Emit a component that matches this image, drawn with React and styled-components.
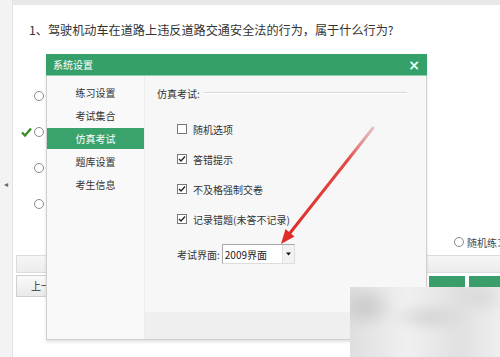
import React from "react";
import styled, { createGlobalStyle } from "styled-components";

const Global = createGlobalStyle`
  html, body { margin: 0; padding: 0; background: #fff; }
  body { font-family: "Noto Sans CJK SC", "Noto Sans", sans-serif; color: #333; }
`;

const Page = styled.div`
  position: relative;
  width: 500px;
  height: 357px;
  overflow: hidden;
  display: flex;
  flex-direction: column;
  background: #fff;
`;

const TopBand = styled.div`
  height: 5px;
  background: #e8e8e8;
  margin-left: 13px;
`;

const Body = styled.div`
  flex: 1;
  display: flex;
  margin-top: -5px;
`;

const Gutter = styled.div`
  width: 13px;
  flex-shrink: 0;
  background: #f3f3f3;
  border-right: 1px solid #e2e2e2;
  display: flex;
  flex-direction: column;
  align-items: center;
  padding-top: 178px;
  box-sizing: border-box;
  font-size: 8px;
  color: #666;
`;

const Content = styled.div`
  flex: 1;
  min-width: 0;
  overflow: hidden;
  display: flex;
  flex-direction: column;
  padding: 20px 0 0 8px;
`;

const Question = styled.div`
  height: 20px;
  line-height: 20px;
  padding-left: 8px;
  font-size: 12.15px;
  color: #333;
  white-space: nowrap;
`;

const Options = styled.div`
  margin-top: 38px;
  display: flex;
  flex-direction: column;
`;

const OptionRow = styled.div`
  height: 36px;
  display: flex;
  align-items: center;
`;

const CheckSlot = styled.div`
  width: 13px;
  display: flex;
  align-items: center;
`;

const Radio = styled.span`
  width: 8px;
  height: 8px;
  border: 1px solid #8a8a8a;
  border-radius: 50%;
  background: #fff;
  flex-shrink: 0;
`;

const RightOption = styled.div`
  margin-top: 10px;
  height: 20px;
  display: flex;
  align-items: center;
  gap: 3px;
  padding-left: 433px;
  font-size: 10px;
  color: #444;
  white-space: nowrap;
`;

const ToolBand = styled.div`
  margin-top: 3px;
  height: 16px;
  margin-left: -5px;
  background: linear-gradient(#f6f6f6, #ececec);
  border: 1px solid #dcdcdc;
  border-right: none;
`;

const ButtonRow = styled.div`
  display: flex;
  align-items: flex-start;
  margin-left: -5px;
  margin-top: 2px;
  gap: 4px;
`;

const GreyButton = styled.div`
  width: 34px;
  height: 20px;
  flex-shrink: 0;
  border: 1px solid #cfcfcf;
  background: linear-gradient(#fafafa, #e9e9e9);
  font-size: 10px;
  line-height: 20px;
  padding-left: 14px;
  white-space: nowrap;
  color: #333;
`;

const GreenButton = styled.div`
  width: ${(p) => p.w}px;
  flex-shrink: 0;
  height: 16px;
  background: #3a9e6a;
  margin-top: 1px;
  margin-left: ${(p) => p.ml || 0}px;
`;

/* Dialog */
const Dialog = styled.div`
  position: absolute;
  left: 46px;
  top: 54px;
  width: 381px;
  height: 286px;
  display: flex;
  flex-direction: column;
  background: #f7f7f7;
  border: 1px solid #cfcfcf;
  border-top: none;
  box-sizing: border-box;
  box-shadow: 0 2px 3px rgba(0, 0, 0, 0.12);
`;

const TitleBar = styled.div`
  height: 21px;
  margin: 0 -1px;
  background: #36a06b;
  border-bottom: 1px solid #8fcfac;
  display: flex;
  align-items: center;
  justify-content: space-between;
  padding: 0 7px 0 7px;
  color: #fff;
  font-size: 10px;
`;

const Close = styled.span`
  font-size: 14px;
  line-height: 1;
  font-family: "DejaVu Sans", sans-serif;
  font-weight: bold;
  color: #e8fff0;
`;

const DialogBody = styled.div`
  flex: 1;
  display: flex;
`;

const Nav = styled.div`
  width: 97px;
  background: #f9f9f9;
  border-right: 1px solid #ececec;
  padding-top: 5px;
  display: flex;
  flex-direction: column;
`;

const NavItem = styled.div`
  height: 21px;
  margin: 1px 0;
  line-height: 21px;
  text-align: center;
  font-size: 10px;
  color: ${(p) => (p.active ? "#fff" : "#333")};
  background: ${(p) => (p.active ? "#3aa36d" : "transparent")};
`;

const Panel = styled.div`
  flex: 1;
  display: flex;
  flex-direction: column;
`;

const PanelMain = styled.div`
  flex: 1;
  background: #f7f7f7;
  padding: 10px 15px 0 12px;
  display: flex;
  flex-direction: column;
`;

const Legend = styled.div`
  height: 14px;
  display: flex;
  align-items: center;
  gap: 4px;
  font-size: 10px;
  color: #333;
`;

const Groove = styled.div`
  flex: 1;
  height: 0;
  border-top: 1px solid #d8d8d8;
  border-bottom: 1px solid #fff;
  margin-right: 4px;
`;

const Fields = styled.div`
  margin-top: 14px;
  padding-left: 20px;
  display: flex;
  flex-direction: column;
`;

const CheckRow = styled.div`
  height: 30px;
  display: flex;
  align-items: center;
  gap: 6px;
  font-size: 10px;
  color: #333;
`;

const Box = styled.span`
  width: 8px;
  height: 8px;
  border: 1px solid #777;
  background: #fff;
  display: flex;
  align-items: center;
  justify-content: center;
`;

const SelectRow = styled.div`
  margin-top: 10px;
  height: 20px;
  display: flex;
  align-items: center;
  gap: 2px;
  font-size: 10px;
  color: #333;
`;

const Select = styled.div`
  width: 73px;
  height: 20px;
  box-sizing: border-box;
  border: 1px solid #a8a8a8;
  border-right-color: #ddd;
  border-bottom-color: #ddd;
  background: #fff;
  display: flex;
  align-items: center;
  justify-content: space-between;
  padding-left: 2px;
  font-size: 10px;
  color: #222;
`;

const DropBtn = styled.span`
  width: 11px;
  height: 18px;
  background: #f2f2f2;
  border-left: 1px solid #e4e4e4;
  display: flex;
  align-items: center;
  justify-content: center;
`;

const PanelFooter = styled.div`
  height: 27px;
  background: #efefef;
`;

const Overlay = styled.svg`
  position: absolute;
  left: 0;
  top: 0;
  pointer-events: none;
`;

const Watermark = styled.div`
  position: absolute;
  left: 350px;
  top: 287px;
  width: 150px;
  height: 70px;
  overflow: hidden;
  background: linear-gradient(180deg, #e4e4e4 0%, #ededed 40%, #e2e2e2 70%, #efefef 100%);
`;

const Blur = styled.div`
  position: absolute;
  inset: -10px;
  filter: blur(5px);
  background:
    radial-gradient(ellipse 30px 22px at 25px 30px, #c8c8c8, transparent),
    radial-gradient(ellipse 40px 14px at 90px 40px, #d2d2d2, transparent),
    radial-gradient(ellipse 30px 18px at 140px 20px, #d8d8d8, transparent),
    linear-gradient(90deg, #dcdcdc, #f0f0f0 40%, #e0e0e0 70%, #f2f2f2);
`;

const Check = () => (
  <svg width="8" height="8" viewBox="0 0 8 8">
    <path d="M1 4 L3 6 L7 1.5" fill="none" stroke="#222" strokeWidth="1.3" />
  </svg>
);

const GreenTick = () => (
  <svg width="11" height="10" viewBox="0 0 11 10">
    <path d="M1 5.5 L4 8.5 L10 1.5" fill="none" stroke="#3b8e2a" strokeWidth="2.4" />
  </svg>
);

const DownTriangle = () => (
  <svg width="5" height="4" viewBox="0 0 5 4">
    <polygon points="0,0.5 5,0.5 2.5,3.5" fill="#111" />
  </svg>
);

export default function App() {
  const checks = [
    { label: "随机选项", on: false },
    { label: "答错提示", on: true },
    { label: "不及格强制交卷", on: true },
    { label: "记录错题(未答不记录)", on: true },
  ];
  return (
    <>
      <Global />
      <Page>
        <TopBand />
        <Body>
          <Gutter>◂</Gutter>
          <Content>
            <Question>1、驾驶机动车在道路上违反道路交通安全法的行为，属于什么行为?</Question>
            <Options>
              {[0, 1, 2, 3].map((i) => (
                <OptionRow key={i}>
                  <CheckSlot>{i === 1 && <GreenTick />}</CheckSlot>
                  <Radio />
                </OptionRow>
              ))}
            </Options>
            <RightOption>
              <Radio />
              <span>随机练习</span>
            </RightOption>
            <ToolBand />
            <ButtonRow>
              <GreyButton>上一题</GreyButton>
              <GreenButton w={36} ml={359} />
              <GreenButton w={40} />
            </ButtonRow>
          </Content>
        </Body>

        <Dialog>
          <TitleBar>
            <span>系统设置</span>
            <Close>×</Close>
          </TitleBar>
          <DialogBody>
            <Nav>
              <NavItem>练习设置</NavItem>
              <NavItem>考试集合</NavItem>
              <NavItem active>仿真考试</NavItem>
              <NavItem>题库设置</NavItem>
              <NavItem>考生信息</NavItem>
            </Nav>
            <Panel>
              <PanelMain>
                <Legend>
                  <span>仿真考试:</span>
                  <Groove />
                </Legend>
                <Fields>
                  {checks.map((c) => (
                    <CheckRow key={c.label}>
                      <Box>{c.on && <Check />}</Box>
                      <span>{c.label}</span>
                    </CheckRow>
                  ))}
                  <SelectRow>
                    <span>考试界面:</span>
                    <Select>
                      <span>2009界面</span>
                      <DropBtn>
                        <DownTriangle />
                      </DropBtn>
                    </Select>
                  </SelectRow>
                </Fields>
              </PanelMain>
              <PanelFooter />
            </Panel>
          </DialogBody>
        </Dialog>

        <Overlay width="500" height="357" viewBox="0 0 500 357">
          <defs>
            <linearGradient id="arrowGrad" x1="373" y1="128" x2="290" y2="233" gradientUnits="userSpaceOnUse">
              <stop offset="0" stopColor="#d9a0a0" stopOpacity="0.6" />
              <stop offset="0.3" stopColor="#e24a44" />
              <stop offset="1" stopColor="#e02d2a" />
            </linearGradient>
          </defs>
          <line x1="373" y1="128" x2="290" y2="233" stroke="url(#arrowGrad)" strokeWidth="3" strokeLinecap="round" />
          <polygon points="281,244 294.5,236.5 285.5,229" fill="#e02d2a" />
        </Overlay>

        <Watermark>
          <Blur />
        </Watermark>
      </Page>
    </>
  );
}
